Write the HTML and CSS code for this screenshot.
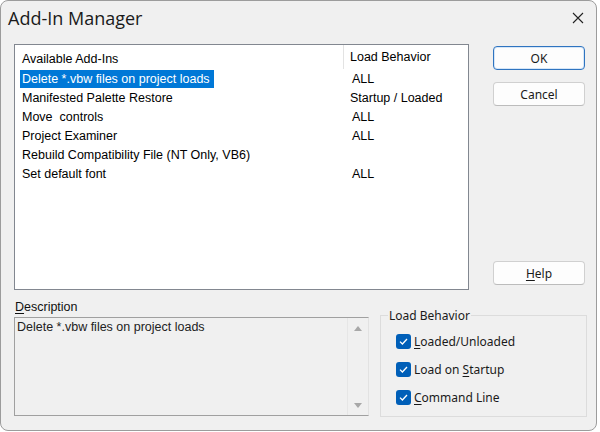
FILE: index.html
```html
<!DOCTYPE html>
<html lang="en">
<head>
    <meta charset="UTF-8">
    <title>Add-In Manager</title>
    <link rel="stylesheet" href="styles.css">
</head>
<body>
    <div class="window">
        <div class="titlebar">
            <span class="title">Add-In Manager</span>
            <svg class="close" width="12" height="12" viewBox="0 0 12 12">
                <path d="M1 1 L11 11 M11 1 L1 11" stroke="#222" stroke-width="1.1" fill="none"/>
            </svg>
        </div>

        <div class="content">
            <div class="top">
                <div class="listbox">
                    <div class="row header">
                        <span class="name">Available Add-Ins</span>
                        <span class="load">Load Behavior</span>
                    </div>
                    <div class="row"><span class="name"><span class="selected">Delete *.vbw files on project loads</span></span><span class="load all">ALL</span></div>
                    <div class="row"><span class="name">Manifested Palette Restore</span><span class="load">Startup / Loaded</span></div>
                    <div class="row"><span class="name">Move&nbsp; controls</span><span class="load all">ALL</span></div>
                    <div class="row"><span class="name">Project Examiner</span><span class="load all">ALL</span></div>
                    <div class="row"><span class="name">Rebuild Compatibility File (NT Only, VB6)</span><span class="load"></span></div>
                    <div class="row"><span class="name">Set default font</span><span class="load all">ALL</span></div>
                </div>

                <div class="buttons">
                    <button class="btn default">OK</button>
                    <button class="btn">Cancel</button>
                    <button class="btn help"><u>H</u>elp</button>
                </div>
            </div>

            <div class="bottom">
                <div class="description">
                    <div class="desc-label"><u>D</u>escription</div>
                    <div class="desc-box">
                        <div class="desc-text">Delete *.vbw files on project loads</div>
                        <div class="scroll">
                            <svg width="8" height="6" viewBox="0 0 8 6"><path d="M0 6 L4 1 L8 6 Z" fill="#a8a8a8"/></svg>
                            <svg width="8" height="6" viewBox="0 0 8 6"><path d="M0 0 L4 5 L8 0 Z" fill="#a8a8a8"/></svg>
                        </div>
                    </div>
                </div>

                <fieldset class="group">
                    <legend>Load Behavior</legend>
                    <label class="check"><span class="box"><svg width="9" height="7" viewBox="0 0 9 7"><path d="M1 3.6 L3.4 6 L8 1" stroke="#fff" stroke-width="1.3" fill="none"/></svg></span><span><u>L</u>oaded/Unloaded</span></label>
                    <label class="check"><span class="box"><svg width="9" height="7" viewBox="0 0 9 7"><path d="M1 3.6 L3.4 6 L8 1" stroke="#fff" stroke-width="1.3" fill="none"/></svg></span><span>Load on <u>S</u>tartup</span></label>
                    <label class="check"><span class="box"><svg width="9" height="7" viewBox="0 0 9 7"><path d="M1 3.6 L3.4 6 L8 1" stroke="#fff" stroke-width="1.3" fill="none"/></svg></span><span><u>C</u>ommand Line</span></label>
                </fieldset>
            </div>
        </div>
    </div>
</body>
</html>
```

FILE: styles.css
```css
html, body {
    margin: 0;
    padding: 0;
    background: #ffffff;
}
.window {
    width: 597px;
    height: 431px;
    box-sizing: border-box;
    border: 1px solid #9c9c9c;
    border-radius: 8px;
    background-color: #f0f0f0;
    font-family: "Liberation Sans", Arial, sans-serif;
    font-size: 12.5px;
    color: #000;
    overflow: hidden;
}
.titlebar {
    height: 33px;
    display: flex;
    align-items: center;
    justify-content: space-between;
    padding: 0 12px 0 7px;
}
.title {
    font-family: "Open Sans", "Noto Sans", sans-serif;
    font-size: 18px;
    color: #1a1a1a;
}
.content {
    padding: 10px 0 0 13px;
}
.top {
    display: flex;
    align-items: flex-start;
}
.listbox {
    width: 455px;
    height: 246px;
    box-sizing: border-box;
    border: 1px solid #828790;
    background: #fff;
    padding-top: 3px;
}
.row {
    display: flex;
    height: 19px;
    align-items: center;
}
.row.header {
    height: 21px;
}
.name {
    width: 328px;
    padding-left: 7px;
    box-sizing: border-box;
    white-space: nowrap;
}
.header .load {
    border-left: 1px solid #e3e3e3;
    height: 24px;
    margin-top: -3px;
    display: flex;
    align-items: center;
    padding-left: 6px;
}
.load {
    padding-left: 7px;
    white-space: nowrap;
}
.load.all {
    padding-left: 9px;
}
.selected {
    background: #0078d7;
    color: #fff;
    padding: 2px 4px 2px 2px;
    margin-left: -2px;
}
.buttons {
    display: flex;
    flex-direction: column;
    margin-left: 24px;
    margin-top: 2px;
    height: 239px;
}
.btn {
    width: 92px;
    height: 24px;
    box-sizing: border-box;
    border: 1px solid #d0d0d0;
    border-bottom-color: #bcbcbc;
    border-radius: 4px;
    background: #fdfdfd;
    font-family: "Noto Sans", "Open Sans", sans-serif;
    font-size: 12px;
    color: #1a1a1a;
    margin-bottom: 12px;
    padding: 0;
}
.btn.default {
    border: 1px solid #2f74c0;
    box-shadow: inset 0 0 0 1px #d6e6f7;
}
.btn.help {
    margin-top: auto;
    margin-bottom: 0;
}
.bottom {
    display: flex;
    align-items: flex-start;
    margin-top: 10px;
}
.description {
    width: 355px;
}
.desc-label {
    height: 17px;
    padding-left: 1px;
    font-size: 12.5px;
    color: #111;
}
.desc-box {
    display: flex;
    height: 99px;
    box-sizing: border-box;
    border: 1px solid #a0a0a0;
    border-right-color: #e2e2e2;
}
.desc-text {
    flex: 1;
    padding: 2px 2px;
    font-size: 12.5px;
    color: #222;
    border-right: 1px solid #e6e6e6;
}
.scroll {
    width: 20px;
    display: flex;
    flex-direction: column;
    justify-content: space-between;
    align-items: center;
    padding: 7px 0 6px;
}
.group {
    margin: 7px 0 0 11px;
    width: 207px;
    height: 110px;
    box-sizing: border-box;
    border: 1px solid #dcdcdc;
    padding: 3px 0 0 15px;
    font-family: "Noto Sans", "Open Sans", sans-serif;
    font-size: 12px;
    color: #1a1a1a;
}
.group legend {
    padding: 0 1px;
    margin-left: -8px;
}
.check {
    display: flex;
    align-items: center;
    height: 28px;
    gap: 3px;
}
.box {
    width: 15px;
    height: 15px;
    border-radius: 3px;
    background: #005fb8;
    display: flex;
    align-items: center;
    justify-content: center;
}
u {
    text-decoration-thickness: 1px;
    text-underline-offset: 2px;
}
```
